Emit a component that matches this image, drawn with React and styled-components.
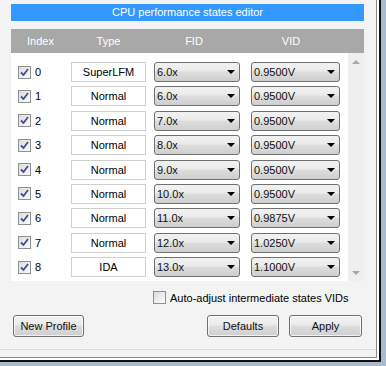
import React from "react";
import styled, { createGlobalStyle } from "styled-components";

const Global = createGlobalStyle`
  html, body { margin: 0; padding: 0; background: #a9bccf; }
  body { font-family: Tahoma, "Liberation Sans", Arial, sans-serif; font-size: 11px; color: #000; }
  * { box-sizing: border-box; }
`;

const Frame = styled.div`
  width: 386px;
  height: 366px;
  background: #a9bccf;
`;

const Window = styled.div`
  width: 381px;
  height: 362px;
  background: #ffffff;
  border-right: 2px solid #111;
  border-bottom: 2px solid #111;
`;

const Inner = styled.div`
  width: 377px;
  height: 358px;
  background: #f3f3f3;
  border-right: 1px solid #8a8a8a;
  border-bottom: 1px solid #8a8a8a;
  padding: 4px 0 0 11px;
  display: flex;
  flex-direction: column;
`;

const Title = styled.div`
  width: 353px;
  height: 17px;
  line-height: 17px;
  background: #3399ff;
  color: #fff;
  text-align: center;
  font-size: 11px;
`;

const Header = styled.div`
  margin-top: 8px;
  width: 353px;
  height: 24px;
  background: #a8a8a8;
  color: #fff;
  display: grid;
  grid-template-columns: 59px 77px 94px 100px;
  align-items: center;
`;

const HeadCell = styled.div`
  text-align: center;
  font-size: 11px;
`;

const Body = styled.div`
  display: flex;
  width: 353px;
  height: 228px;
`;

const Panel = styled.div`
  width: 337px;
  background: #fff;
  padding-top: 9px;
  display: flex;
  flex-direction: column;
  gap: 4.375px;
`;

const Scroll = styled.div`
  width: 16px;
  background: #efefef;
  display: flex;
  flex-direction: column;
  justify-content: space-between;
  align-items: center;
  padding: 7px 0 6px;
`;

const Arrow = styled.div`
  width: 0;
  height: 0;
  border-left: 4px solid transparent;
  border-right: 4px solid transparent;
  ${(p) => (p.$down ? "border-top: 4px solid #a8a8a8;" : "border-bottom: 4px solid #a8a8a8;")}
`;

const Row = styled.div`
  display: flex;
  align-items: center;
  height: 20px;
`;

const IndexCell = styled.div`
  width: 60px;
  padding-left: 7px;
  display: flex;
  align-items: center;
  gap: 4px;
`;

const Box = styled.span`
  width: 13px;
  height: 13px;
  border: 1px solid #8e8f8f;
  background: linear-gradient(135deg, #dcdcdc, #fbfbfb);
  display: inline-flex;
  align-items: center;
  justify-content: center;
  flex: none;
`;

const TypeBox = styled.div`
  width: 75px;
  height: 20px;
  border: 1px solid #cfcfcf;
  background: #fff;
  text-align: center;
  line-height: 18px;
`;

const Select = styled.div`
  width: ${(p) => p.$w}px;
  margin-left: ${(p) => p.$ml}px;
  height: 20px;
  border: 1px solid #707070;
  border-radius: 3px;
  background: linear-gradient(#f2f2f2 0%, #ebebeb 45%, #dddddd 50%, #cfcfcf 100%);
  display: flex;
  align-items: center;
  justify-content: space-between;
  padding: 0 4px 0 2px;
  color: #111;
`;

const Caret = styled.span`
  width: 0;
  height: 0;
  border-left: 4px solid transparent;
  border-right: 4px solid transparent;
  border-top: 4px solid #000;
`;

const AutoRow = styled.div`
  margin-top: 10px;
  padding-left: 142px;
  display: flex;
  align-items: center;
  gap: 4px;
  height: 13px;
`;

const Buttons = styled.div`
  margin-top: 11px;
  padding-left: 2px;
  display: flex;
  align-items: center;
  width: 353px;
`;

const Button = styled.div`
  width: ${(p) => p.$w}px;
  margin-left: ${(p) => p.$ml || 0}px;
  height: 22px;
  border: 1px solid #707070;
  border-radius: 3px;
  background: linear-gradient(#f2f2f2 0%, #ebebeb 45%, #dddddd 50%, #cfcfcf 100%);
  display: flex;
  align-items: center;
  justify-content: center;
  color: #111;
  box-shadow: inset 0 0 0 1px rgba(255,255,255,0.7);
`;

const Sep = styled.div`
  margin-top: 12px;
  margin-left: -11px;
  width: 376px;
  height: 1px;
  background: #d5dfe9;
`;

const Check = ({ on }) => (
  <Box>
    {on && (
      <svg width="9" height="9" viewBox="0 0 9 9">
        <path d="M1 4.5 L3.5 7 L8 1" fill="none" stroke="#3c4f96" strokeWidth="1.8" />
      </svg>
    )}
  </Box>
);

const rows = [
  ["SuperLFM", "6.0x", "0.9500V"],
  ["Normal", "6.0x", "0.9500V"],
  ["Normal", "7.0x", "0.9500V"],
  ["Normal", "8.0x", "0.9500V"],
  ["Normal", "9.0x", "0.9500V"],
  ["Normal", "10.0x", "0.9500V"],
  ["Normal", "11.0x", "0.9875V"],
  ["Normal", "12.0x", "1.0250V"],
  ["IDA", "13.0x", "1.1000V"],
];

export default function App() {
  return (
    <>
      <Global />
      <Frame>
        <Window>
          <Inner>
            <Title>CPU performance states editor</Title>
            <Header>
              <HeadCell>Index</HeadCell>
              <HeadCell>Type</HeadCell>
              <HeadCell>FID</HeadCell>
              <HeadCell>VID</HeadCell>
            </Header>
            <Body>
              <Panel>
                {rows.map(([t, f, v], i) => (
                  <Row key={i}>
                    <IndexCell>
                      <Check on />
                      <span>{i}</span>
                    </IndexCell>
                    <TypeBox>{t}</TypeBox>
                    <Select $w={86} $ml={8}>
                      <span>{f}</span>
                      <Caret />
                    </Select>
                    <Select $w={89} $ml={11}>
                      <span>{v}</span>
                      <Caret />
                    </Select>
                  </Row>
                ))}
              </Panel>
              <Scroll>
                <Arrow />
                <Arrow $down />
              </Scroll>
            </Body>
            <AutoRow>
              <Check />
              <span>Auto-adjust intermediate states VIDs</span>
            </AutoRow>
            <Buttons>
              <Button $w={71}>New Profile</Button>
              <Button $w={72} $ml={123}>Defaults</Button>
              <Button $w={73} $ml={10}>Apply</Button>
            </Buttons>
            <Sep />
          </Inner>
        </Window>
      </Frame>
    </>
  );
}
